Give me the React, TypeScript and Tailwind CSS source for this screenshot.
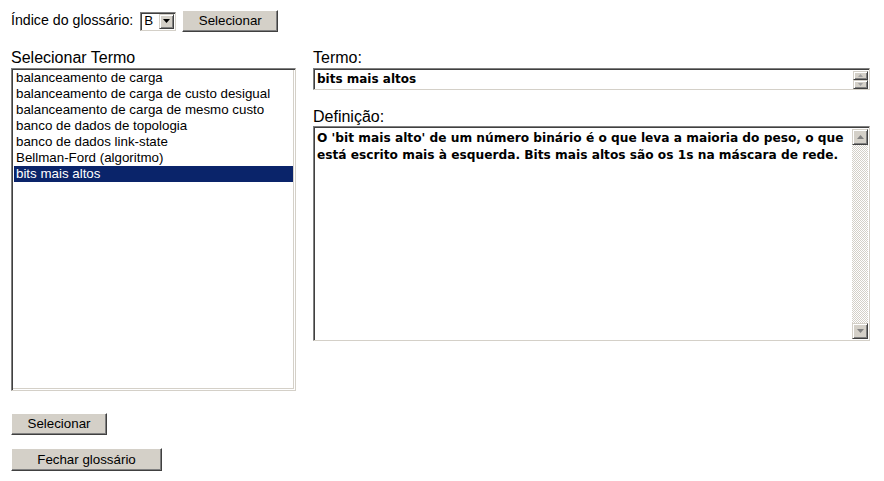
import React from "react";

const terms = [
  "balanceamento de carga",
  "balanceamento de carga de custo desigual",
  "balanceamento de carga de mesmo custo",
  "banco de dados de topologia",
  "banco de dados link-state",
  "Bellman-Ford (algoritmo)",
  "bits mais altos",
];

function WinButton({ label, width }: { label: string; width: string }) {
  return (
    <button
      className={`${width} bg-[#d4d0c8] border border-t-white border-l-white border-r-[#404040] border-b-[#404040] shadow-[inset_-1px_-1px_0_#808080] text-[13.33px] leading-none text-black font-['Liberation_Sans',Arial,sans-serif]`}
    >
      {label}
    </button>
  );
}

function ArrowButton({ down }: { down?: boolean }) {
  return (
    <div className="w-[16px] h-[16px] bg-[#d4d0c8] border border-t-[#d4d0c8] border-l-[#d4d0c8] border-r-[#404040] border-b-[#404040] shadow-[inset_1px_1px_0_#fff,inset_-1px_-1px_0_#808080] flex items-center justify-center">
      <svg width="7" height="4" viewBox="0 0 7 4">
        {down ? (
          <path d="M0 0h7L3.5 4z" fill="#808080" />
        ) : (
          <path d="M0 4h7L3.5 0z" fill="#808080" />
        )}
      </svg>
    </div>
  );
}

function SmallArrow({ down }: { down?: boolean }) {
  return (
    <div className="w-[15px] h-[9px] bg-[#d4d0c8] border border-t-[#d4d0c8] border-l-[#d4d0c8] border-r-[#404040] border-b-[#404040] shadow-[inset_1px_1px_0_#fff,inset_-1px_-1px_0_#808080] flex items-center justify-center">
      <svg width="5" height="3" viewBox="0 0 5 3">
        {down ? (
          <path d="M0 0h5L2.5 3z" fill="#a0a0a0" />
        ) : (
          <path d="M0 3h5L2.5 0z" fill="#a0a0a0" />
        )}
      </svg>
    </div>
  );
}

export default function App() {
  return (
    <div className="w-[884px] h-[481px] bg-white text-black font-['Liberation_Sans',Arial,sans-serif] pl-[11px] pt-[9px]">
      {/* índice */}
      <div className="flex items-center h-[22px]">
        <span className="text-[14.2px] leading-none">Índice do glossário:</span>
        <div className="ml-[7px] mt-[2px] w-[36px] h-[19px] bg-white border border-t-[#808080] border-l-[#808080] border-r-[#d4d0c8] border-b-[#d4d0c8] shadow-[inset_1px_1px_0_#404040] flex items-center justify-between pl-[3px] pr-[1px]">
          <span className="text-[13.33px] leading-none">B</span>
          <div className="w-[15px] h-[15px] bg-[#d4d0c8] border border-t-[#d4d0c8] border-l-[#d4d0c8] border-r-[#404040] border-b-[#404040] shadow-[inset_1px_1px_0_#fff,inset_-1px_-1px_0_#808080] flex items-center justify-center">
            <svg width="7" height="4" viewBox="0 0 7 4">
              <path d="M0 0h7L3.5 4z" fill="#000" />
            </svg>
          </div>
        </div>
        <div className="ml-[6px]">
          <WinButton label="Selecionar" width="w-[96px] h-[22px]" />
        </div>
      </div>

      <div className="flex mt-[18px]">
        {/* left column */}
        <div className="w-[285px]">
          <div className="text-[16px] leading-[18px] h-[19px]">Selecionar Termo</div>
          <div className="h-[323px] border border-t-[#808080] border-l-[#808080] border-r-[#d4d0c8] border-b-[#d4d0c8] shadow-[inset_1px_1px_0_#404040,inset_-1px_-1px_0_#fff,inset_-2px_-2px_0_#d4d0c8] pt-[1px] px-[1px]">
            {terms.map((t, i) => (
              <div
                key={t}
                className={`h-[16px] pl-[2px] ml-[1px] mr-[1px] text-[13.33px] leading-[16px] whitespace-nowrap ${
                  i === terms.length - 1 ? "bg-[#0a246a] text-white" : ""
                }`}
              >
                {t}
              </div>
            ))}
          </div>
          <div className="mt-[20px]">
            <WinButton label="Selecionar" width="w-[96px] h-[22px]" />
          </div>
          <div className="mt-[12px]">
            <WinButton label="Fechar glossário" width="w-[151px] h-[23px]" />
          </div>
        </div>

        {/* right column */}
        <div className="ml-[17px] w-[557px]">
          <div className="text-[16px] leading-[18px] h-[19px]">Termo:</div>
          <div className="h-[22px] border border-t-[#808080] border-l-[#808080] border-r-[#d4d0c8] border-b-[#d4d0c8] shadow-[inset_1px_1px_0_#404040] flex items-center justify-between pl-[3px] pr-[1px]">
            <span className="font-['DejaVu_Sans',Verdana,sans-serif] font-bold text-[12px] leading-none">
              bits mais altos
            </span>
            <div className="flex flex-col mt-[1px]">
              <SmallArrow />
              <SmallArrow down />
            </div>
          </div>

          <div className="mt-[18px] text-[16px] leading-[18px] h-[18px]">Definição:</div>
          <div className="h-[215px] border border-t-[#808080] border-l-[#808080] border-r-[#d4d0c8] border-b-[#d4d0c8] shadow-[inset_1px_1px_0_#404040] flex pl-[3px] pt-[3px] pr-[1px] pb-[1px]">
            <p className="flex-1 pr-[4px] font-['DejaVu_Sans',Verdana,sans-serif] font-bold text-[12.2px] leading-[16.5px]">
              O 'bit mais alto' de um número binário é o que leva a maioria do peso, o que
              está escrito mais à esquerda. Bits mais altos são os 1s na máscara de rede.
            </p>
            <div className="w-[16px] -mt-[1px] flex flex-col bg-[repeating-conic-gradient(#d4d0c8_0%_25%,#fff_0%_50%)] bg-[length:2px_2px]">
              <ArrowButton />
              <div className="flex-1" />
              <ArrowButton down />
            </div>
          </div>
        </div>
      </div>
    </div>
  );
}
